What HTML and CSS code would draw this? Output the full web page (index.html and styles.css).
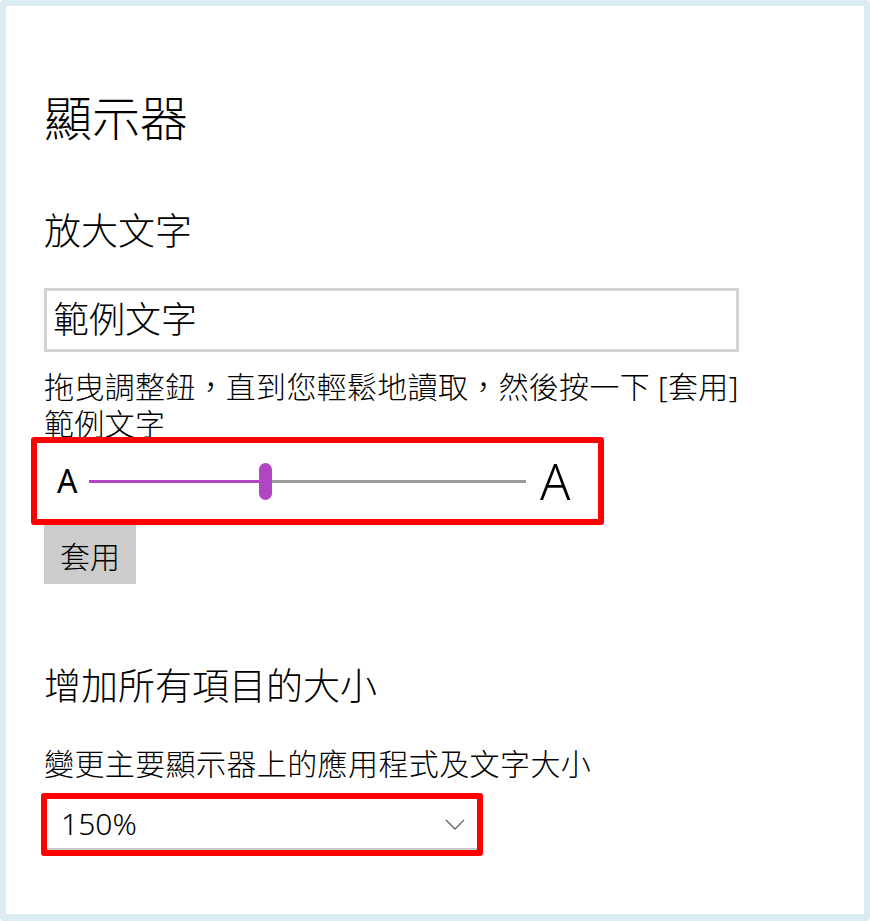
FILE: index.html
```html
<!DOCTYPE html>
<html lang="zh-Hant">
<head>
  <meta charset="UTF-8">
  <meta name="viewport" content="width=device-width, initial-scale=1.0">
  <title>顯示器</title>
  <link rel="stylesheet" href="styles.css">
</head>
<body>
  <div class="frame">
    <h1 class="page-title">顯示器</h1>

    <h2 class="section-title">放大文字</h2>
    <div class="sample-box">範例文字</div>
    <p class="hint">拖曳調整鈕，直到您輕鬆地讀取，然後按一下 [套用]<br>範例文字</p>

    <div class="slider-row highlight">
      <span class="a-small">A</span>
      <div class="track">
        <div class="track-fill" style="width: 170px"></div>
        <div class="thumb"></div>
        <div class="track-rest"></div>
      </div>
      <span class="a-large">A</span>
    </div>

    <button class="apply-btn">套用</button>

    <h2 class="section-title section-gap">增加所有項目的大小</h2>
    <p class="label">變更主要顯示器上的應用程式及文字大小</p>

    <div class="dropdown highlight">
      <div class="dropdown-inner">
        <span class="dropdown-value">150%</span>
        <svg class="chevron" width="20" height="12" viewBox="0 0 20 12">
          <path d="M1 1 L10 10 L19 1" fill="none" stroke="#666" stroke-width="1.4"/>
        </svg>
      </div>
    </div>
  </div>
</body>
</html>
```

FILE: styles.css
```css
body {
  margin: 0;
  padding: 0;
  font-family: "Noto Sans", "Noto Sans CJK TC", sans-serif;
  font-weight: 300;
  color: #000;
}

.frame {
  width: 870px;
  height: 921px;
  box-sizing: border-box;
  border-style: solid;
  border-color: #daecf2;
  border-width: 6px 6px 7px 6px;
  border-radius: 4px;
  background-color: #fff;
  padding-left: 38px;
  overflow: hidden;
}

.page-title {
  margin: 80px 0 0;
  font-size: 48px;
  font-weight: 300;
  line-height: 64px;
}

.section-title {
  margin: 57px 0 0;
  font-size: 37px;
  font-weight: 300;
  line-height: 48px;
}

.section-gap {
  margin-top: 78px;
}

.sample-box {
  margin-top: 33px;
  width: 695px;
  height: 64px;
  box-sizing: border-box;
  border: 3px solid #d4d4d4;
  padding-left: 6px;
  font-size: 36px;
  line-height: 58px;
}

.hint {
  margin: 16px 0 0;
  font-size: 30px;
  line-height: 37px;
  letter-spacing: 0.3px;
}

.label {
  margin: 35px 0 0;
  font-size: 30px;
  line-height: 37px;
  letter-spacing: 0.4px;
}

.highlight {
  border: 6px solid #ff0000;
  border-radius: 3px;
  box-sizing: border-box;
  position: relative;
}

/* slider */
.slider-row {
  margin: -5px 0 0 -13px;
  width: 573px;
  height: 88px;
  display: flex;
  align-items: center;
  padding: 0 27px 0 20px;
}

.a-small {
  font-size: 32px;
  font-weight: 400;
  width: 32px;
  line-height: 1;
}

.a-large {
  font-size: 50px;
  line-height: 1;
  margin-left: 14px;
}

.track {
  display: flex;
  align-items: center;
  width: 437px;
  height: 38px;
}

.track-fill {
  height: 3px;
  background-color: #b146c2;
}

.thumb {
  width: 13px;
  height: 37px;
  border-radius: 7px;
  background-color: #b146c2;
}

.track-rest {
  flex: 1;
  height: 3px;
  background-color: #999;
}

.apply-btn {
  display: block;
  margin: 0;
  width: 92px;
  height: 59px;
  border: none;
  background-color: #ccc;
  font-family: "Noto Sans CJK TC", sans-serif;
  font-weight: 300;
  font-size: 30px;
  color: #000;
  padding: 0;
}

/* dropdown */
.dropdown {
  margin: 11px 0 0 -3px;
  width: 442px;
  height: 63px;
}

.dropdown-inner {
  height: 100%;
  box-sizing: border-box;
  border-bottom: 2px solid #c8c8c8;
  display: flex;
  align-items: center;
  justify-content: space-between;
  padding: 0 12px 0 14px;
}

.dropdown-value {
  font-size: 30px;
}

.chevron {
  margin-top: 2px;
}
```
